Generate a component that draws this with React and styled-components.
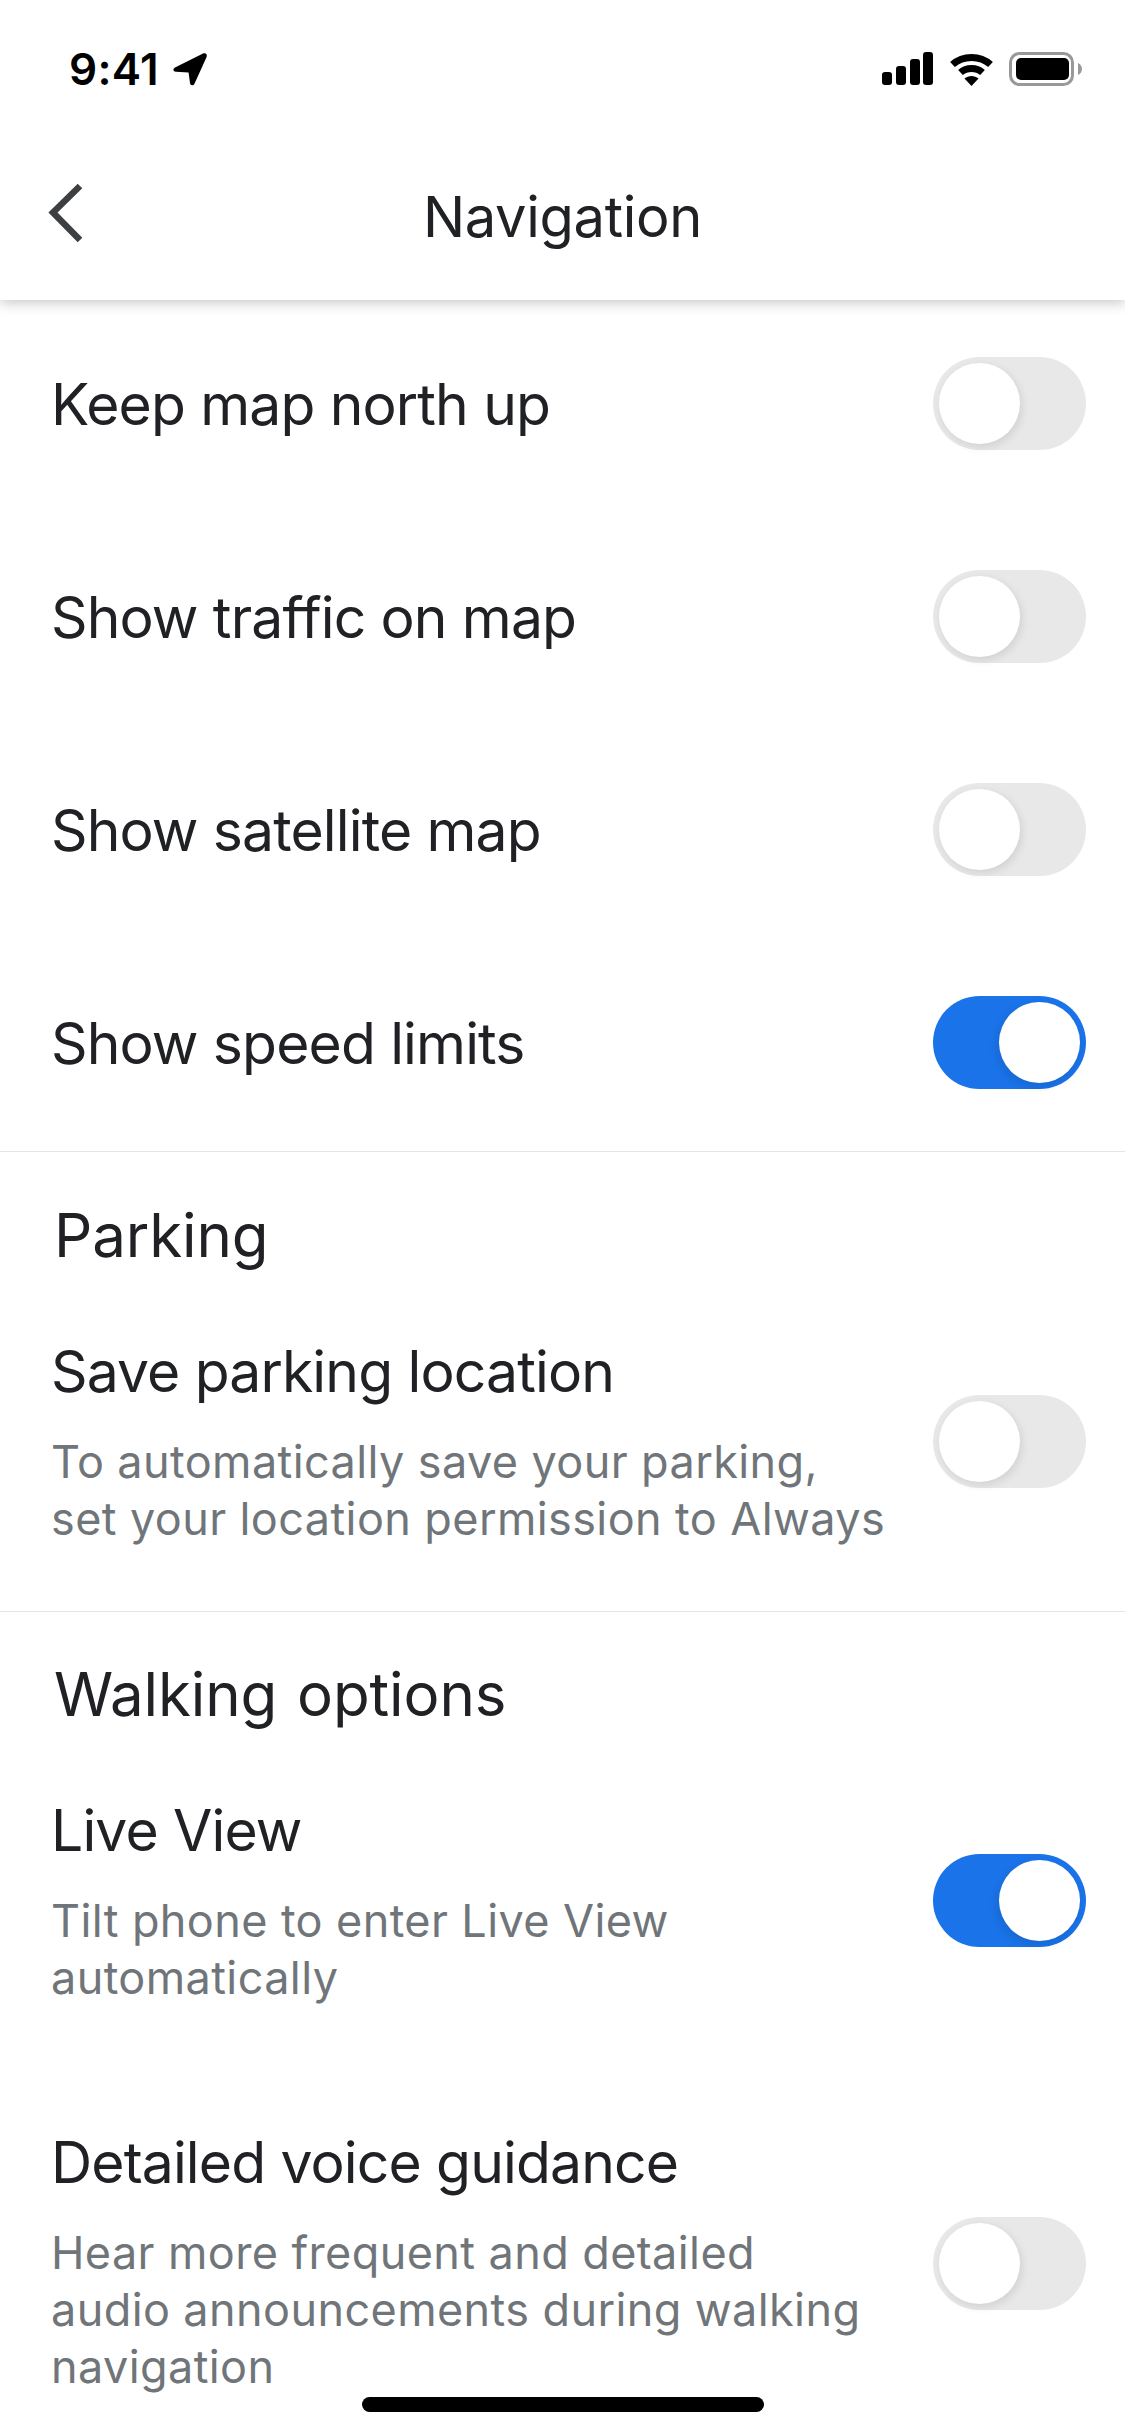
import React from 'react';
import styled, { createGlobalStyle } from 'styled-components';

const GlobalStyle = createGlobalStyle`
  html, body {
    margin: 0;
    padding: 0;
    background: #fff;
  }
  * {
    box-sizing: border-box;
  }
`;

const Screen = styled.div`
  position: relative;
  width: 1125px;
  height: 2436px;
  overflow: hidden;
  background: #fff;
  font-family: "Inter", "Liberation Sans", sans-serif;
  color: #202124;
`;

const Header = styled.header`
  height: 300px;
  background: #fff;
  box-shadow: 0 3px 12px rgba(0, 0, 0, 0.22);
  display: flex;
  flex-direction: column;
`;

const StatusBar = styled.div`
  height: 136px;
  padding: 52px 43px 0 69px;
  display: flex;
  justify-content: space-between;
  align-items: flex-start;
`;

const Clock = styled.div`
  display: flex;
  align-items: center;
  gap: 13px;
  height: 34px;
  font-size: 44px;
  font-weight: 600;
  letter-spacing: 0.3px;
  color: #000;
`;

const StatusIcons = styled.div`
  display: flex;
  align-items: flex-start;
  gap: 15.5px;
`;

const NavBar = styled.div`
  flex: 1;
  display: flex;
  align-items: center;
  justify-content: center;
  position: relative;
`;

const BackButton = styled.div`
  position: absolute;
  left: 46px;
  top: 47px;
  display: flex;
`;

const Title = styled.h1`
  margin: 0 0 3px;
  font-size: 56px;
  font-weight: 400;
  line-height: 70px;
  letter-spacing: -0.3px;
  color: #202124;
`;

const SwitchGroup = styled.div`
  padding: 3px 39px 5px 51px;
  display: flex;
  flex-direction: column;
  gap: 9px;
`;

const SwitchRow = styled.div`
  min-height: 204px;
  display: flex;
  align-items: center;
  justify-content: space-between;
`;

const Section = styled.section`
  border-top: 1px solid #e3e5e7;
  padding: ${(p) => p.$top}px 39px ${(p) => p.$bottom}px 51px;
`;

const SectionHeading = styled.h2`
  margin: -1px 0 67px 3px;
  font-size: 60px;
  font-weight: 400;
  line-height: 70px;
  letter-spacing: -0.1px;
  word-spacing: 3px;
  color: #202124;
`;

const DetailRow = styled.div`
  display: flex;
  align-items: center;
  justify-content: space-between;
  margin-bottom: ${(p) => p.$after || 0}px;
`;

const RowLabel = styled.div`
  font-size: 57px;
  font-weight: 400;
  line-height: 70px;
  letter-spacing: -0.85px;
  color: #202124;
`;

const RowText = styled.div`
  display: flex;
  flex-direction: column;
  gap: 26px;
`;

const RowHint = styled.div`
  margin-bottom: 1px;
  font-size: 45px;
  font-weight: 400;
  line-height: 57px;
  letter-spacing: 0.4px;
  color: #70757a;
  white-space: pre-line;
`;

const Track = styled.div`
  width: 153px;
  height: 93px;
  flex: none;
  margin-top: ${(p) => p.$shift || 0}px;
  padding: 6px;
  border-radius: 47px;
  display: flex;
  justify-content: ${(p) => (p.$on ? 'flex-end' : 'flex-start')};
  background: ${(p) => (p.$on ? '#1a73e8' : '#e8e8e8')};
`;

const Knob = styled.div`
  width: 81px;
  height: 81px;
  border-radius: 50%;
  background: #fff;
  box-shadow: ${(p) => (p.$on ? '-2px 4px 10px rgba(0, 0, 0, 0.1)' : '2px 3px 8px rgba(0, 0, 0, 0.1)')};
`;

const HomeIndicator = styled.div`
  position: absolute;
  left: 362px;
  top: 2397px;
  width: 402px;
  height: 15px;
  border-radius: 8px;
  background: #000;
`;

function LocationArrow() {
  return (
    <svg width="36" height="34" viewBox="0 0 36 34">
      <path
        d="M3 15.5 L31 1.6 C33.6 .4 35.6 2.4 34.6 5 L22.6 31.4 C21.4 34 18.4 33.8 18 31 L16.6 20.6 L4 19.8 C1 19.6 .6 16.8 3 15.5 Z"
        fill="#000"
      />
    </svg>
  );
}

function SignalIcon() {
  return (
    <svg width="51" height="33" viewBox="0 0 51 33">
      <rect x="0" y="20" width="10" height="13" rx="3" fill="#000" />
      <rect x="14" y="14" width="10" height="19" rx="3" fill="#000" />
      <rect x="28" y="7" width="10" height="26" rx="3" fill="#000" />
      <rect x="41" y="0" width="10" height="33" rx="3" fill="#000" />
    </svg>
  );
}

function WifiIcon() {
  return (
    <svg width="45" height="34" viewBox="0 0 45 34">
      <path d="M3.5 12.5 C14 3 31 3 41.5 12.5" fill="none" stroke="#000" strokeWidth="7" strokeLinecap="butt" />
      <path d="M11.5 20.5 C17.5 15 27.5 15 33.5 20.5" fill="none" stroke="#000" strokeWidth="7" strokeLinecap="butt" />
      <path d="M15.5 26.5 C19.5 23 25.5 23 29.5 26.5 L22.5 34 Z" fill="#000" />
    </svg>
  );
}

function BatteryIcon() {
  return (
    <svg width="73" height="34" viewBox="0 0 73 34">
      <rect x="1.5" y="1.5" width="62" height="31" rx="9" fill="none" stroke="#999" strokeWidth="3" />
      <rect x="7" y="6" width="53" height="22" rx="5" fill="#000" />
      <path d="M69 11 C71.5 12 73 14.5 73 17 C73 19.5 71.5 22 69 23 Z" fill="#999" />
    </svg>
  );
}

function BackChevron() {
  return (
    <svg width="38" height="60" viewBox="0 0 38 60">
      <path d="M34 3 L7 29.5 L34 57" fill="none" stroke="#3c4043" strokeWidth="6.5" />
    </svg>
  );
}

function Toggle({ on, shift }) {
  return (
    <Track $on={on} $shift={shift}>
      <Knob $on={on} />
    </Track>
  );
}

export default function App() {
  const mapOptions = [
    { label: 'Keep map north up', on: false },
    { label: 'Show traffic on map', on: false },
    { label: 'Show satellite map', on: false },
    { label: 'Show speed limits', on: true },
  ];

  return (
    <Screen>
      <GlobalStyle />
      <Header>
        <StatusBar>
          <Clock>
            9:41
            <LocationArrow />
          </Clock>
          <StatusIcons>
            <SignalIcon />
            <WifiIcon />
            <BatteryIcon />
          </StatusIcons>
        </StatusBar>
        <NavBar>
          <BackButton>
            <BackChevron />
          </BackButton>
          <Title>Navigation</Title>
        </NavBar>
      </Header>

      <SwitchGroup>
        {mapOptions.map((opt) => (
          <SwitchRow key={opt.label}>
            <RowLabel>{opt.label}</RowLabel>
            <Toggle on={opt.on} shift={-3} />
          </SwitchRow>
        ))}
      </SwitchGroup>

      <Section $top={49} $bottom={63}>
        <SectionHeading>Parking</SectionHeading>
        <DetailRow>
          <RowText>
            <RowLabel>Save parking location</RowLabel>
            <RowHint>{'To automatically save your parking,\nset your location permission to Always'}</RowHint>
          </RowText>
          <Toggle on={false} shift={-3} />
        </DetailRow>
      </Section>

      <Section $top={48} $bottom={0}>
        <SectionHeading>Walking options</SectionHeading>
        <DetailRow $after={121}>
          <RowText>
            <RowLabel>Live View</RowLabel>
            <RowHint>{'Tilt phone to enter Live View\nautomatically'}</RowHint>
          </RowText>
          <Toggle on shift={-3} />
        </DetailRow>
        <DetailRow>
          <RowText>
            <RowLabel>Detailed voice guidance</RowLabel>
            <RowHint>{'Hear more frequent and detailed\naudio announcements during walking\nnavigation'}</RowHint>
          </RowText>
          <Toggle on={false} shift={3} />
        </DetailRow>
      </Section>

      <HomeIndicator />
    </Screen>
  );
}
